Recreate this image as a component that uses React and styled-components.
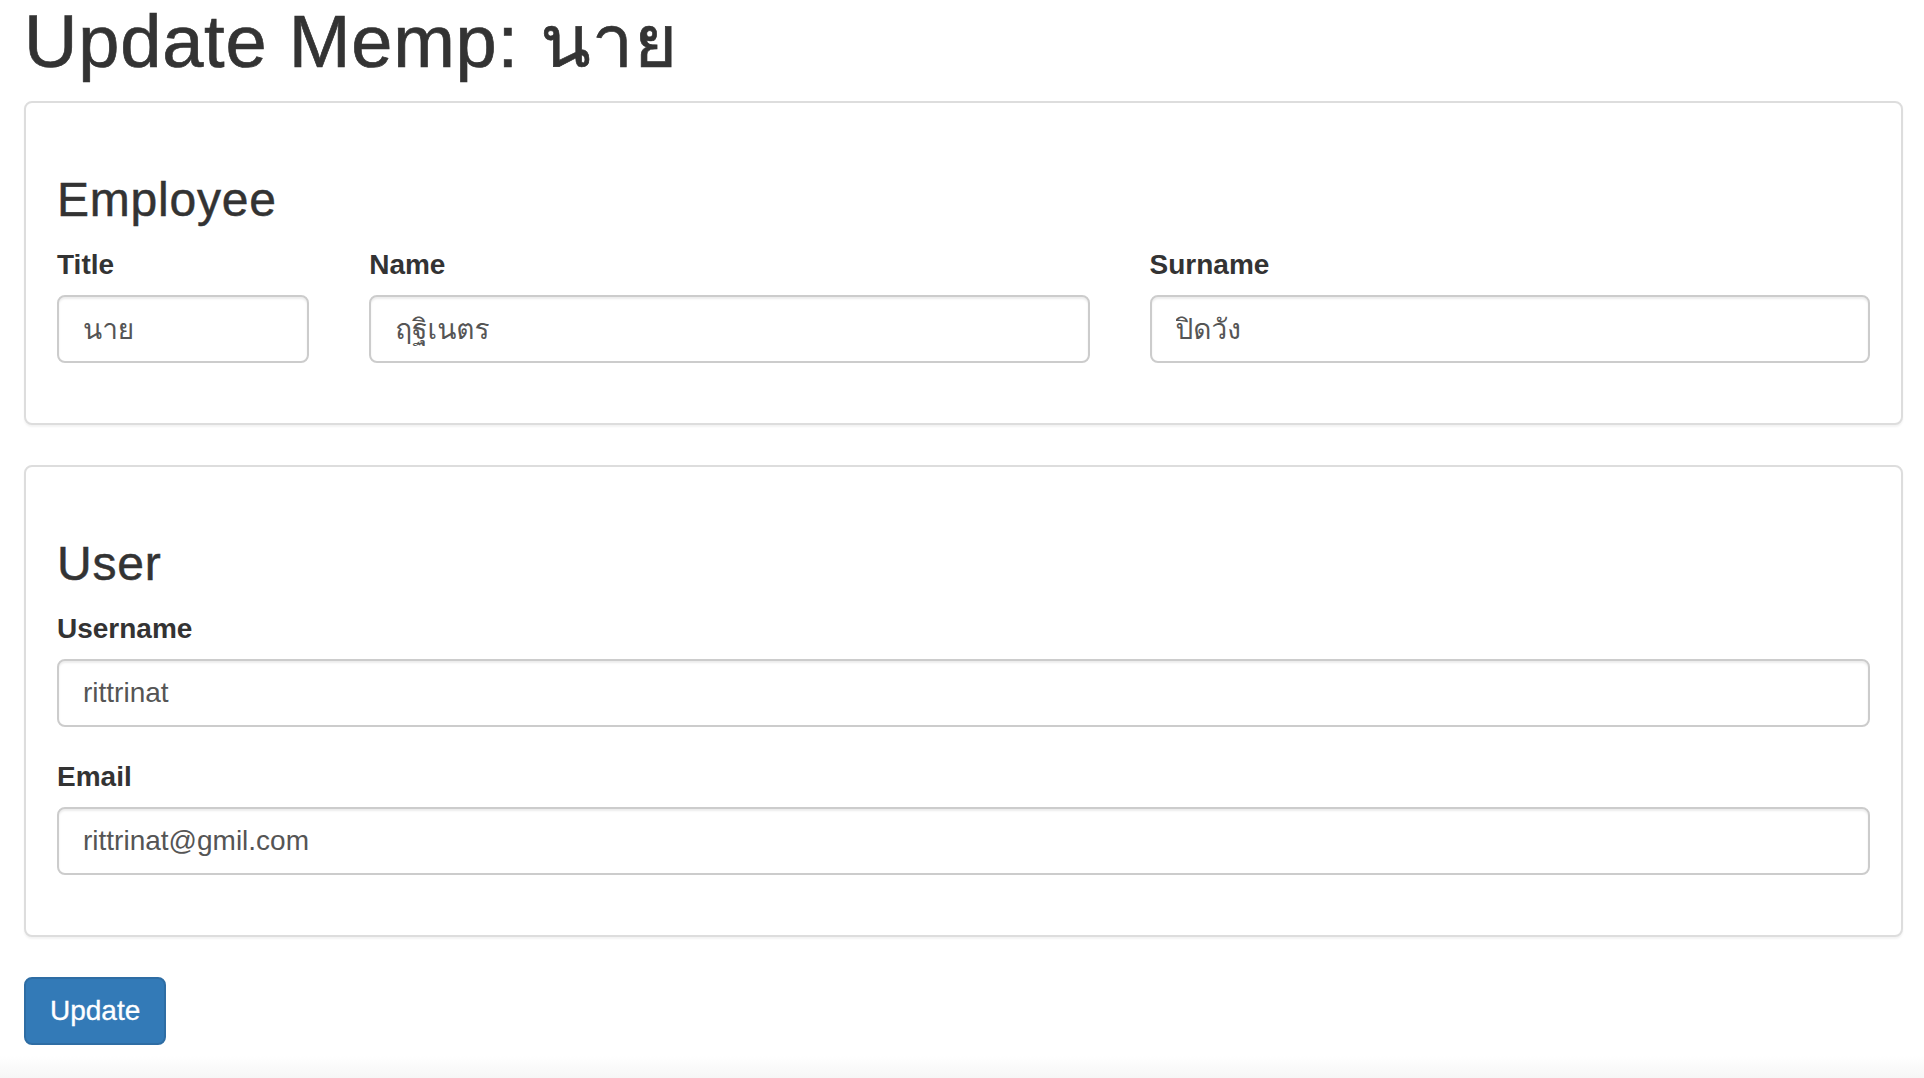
import React from "react";
import styled, { createGlobalStyle } from "styled-components";

const GlobalStyle = createGlobalStyle`
  html, body {
    margin: 0;
    padding: 0;
  }
  body {
    min-height: 100vh;
    background: linear-gradient(to bottom, #fff calc(100% - 22px), #f6f6f6);
    font-family: "Liberation Sans", "Loma", "Garuda", "Waree", "Noto Sans Thai Looped", "Noto Sans Thai", "Noto Sans", Arial, sans-serif;
    color: #333;
  }
`;

const Page = styled.div`
  padding: 0 21px 0 24px;
`;

const PageTitle = styled.h1`
  margin: 2px 0 19px;
  font-size: 74px;
  line-height: 80px;
  font-weight: 400;
  letter-spacing: 0.8px;
  color: #333;
  -webkit-text-stroke: 0.7px #333;
`;

const Panel = styled.section`
  border: 2px solid #ddd;
  border-radius: 8px;
  box-shadow: 0 2px 2px rgba(0, 0, 0, 0.05);
  background: #fff;
  padding: 71px 31px 60px;
  margin-bottom: 40px;
`;

const SectionHeading = styled.h3`
  margin: 0 0 18px;
  font-size: 48px;
  line-height: 1.1;
  font-weight: 400;
  letter-spacing: 0.8px;
  color: #333;
  -webkit-text-stroke: 0.5px #333;
`;

const Row = styled.div`
  display: grid;
  grid-template-columns: calc((100% + 60px) / 6 - 60px) 1fr 1fr;
  column-gap: 60px;
`;

const Field = styled.div`
  margin-bottom: ${(p) => (p.last ? "0" : "30px")};
`;

const Label = styled.label`
  display: block;
  margin-bottom: 10px;
  font-size: 28px;
  line-height: 40px;
  font-weight: 700;
  color: #333;
`;

const Input = styled.input`
  display: block;
  box-sizing: border-box;
  width: 100%;
  height: 68px;
  padding: 12px 24px;
  border: 2px solid #ccc;
  border-radius: 8px;
  box-shadow: inset 0 2px 2px rgba(0, 0, 0, 0.075);
  font-family: inherit;
  font-size: 28px;
  line-height: 40px;
  color: #555;
  background: #fff;
  outline: none;
`;

const Button = styled.button`
  display: inline-block;
  padding: 12px 24px;
  border: 2px solid #2e6da4;
  border-radius: 8px;
  background: #337ab7;
  color: #fff;
  font-family: inherit;
  font-size: 28px;
  line-height: 40px;
  font-weight: 400;
  cursor: pointer;
  -webkit-text-stroke: 0.3px #fff;
`;

function App() {
  return (
    <Page>
      <GlobalStyle />
      <PageTitle>Update Memp: นาย</PageTitle>

      <Panel>
        <SectionHeading>Employee</SectionHeading>
        <Row>
          <Field last>
            <Label>Title</Label>
            <Input defaultValue="นาย" readOnly />
          </Field>
          <Field last>
            <Label>Name</Label>
            <Input defaultValue="ฤฐิเนตร" readOnly />
          </Field>
          <Field last>
            <Label>Surname</Label>
            <Input defaultValue="ปิดวัง" readOnly />
          </Field>
        </Row>
      </Panel>

      <Panel>
        <SectionHeading>User</SectionHeading>
        <Field>
          <Label>Username</Label>
          <Input defaultValue="rittrinat" readOnly />
        </Field>
        <Field last>
          <Label>Email</Label>
          <Input defaultValue="rittrinat@gmil.com" readOnly />
        </Field>
      </Panel>

      <Button>Update</Button>
    </Page>
  );
}

export default App;
